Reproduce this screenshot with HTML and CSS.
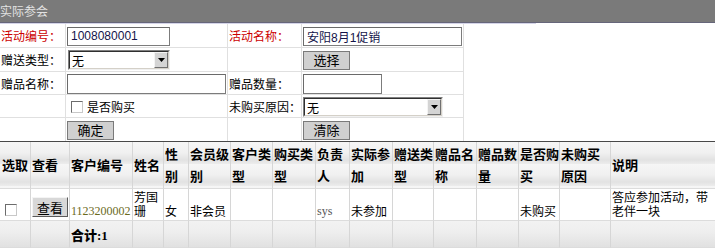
FILE: index.html
```html
<!DOCTYPE html>
<html lang="zh-CN">
<head>
<meta charset="utf-8">
<title>实际参会</title>
<link rel="stylesheet" href="styles.css">
</head>
<body>
<div class="titlebar">实际参会</div>
<div class="accent"></div>
<table class="form">
  <colgroup><col class="fc1"><col class="fc2"><col class="fc3"><col class="fc4"></colgroup>
  <tr class="fr1">
    <td class="lbl req">活动编号：</td>
    <td><input class="txt w-code" type="text" value="1008080001"></td>
    <td class="lbl req">活动名称：</td>
    <td><input class="txt w-name" type="text" value="安阳8月1促销"></td>
  </tr>
  <tr class="fr2">
    <td class="lbl">赠送类型：</td>
    <td>
      <div class="sel w-type">
        <select><option>无</option></select>
        <span class="sel-btn"><svg width="7" height="4" viewBox="0 0 7 4"><path d="M0 0h7L3.5 4z" fill="#000"/></svg></span>
      </div>
    </td>
    <td></td>
    <td><button class="btn" type="button">选择</button></td>
  </tr>
  <tr class="fr3">
    <td class="lbl">赠品名称：</td>
    <td><input class="txt w-gift" type="text"></td>
    <td class="lbl">赠品数量：</td>
    <td><input class="txt w-qty" type="text"></td>
  </tr>
  <tr class="fr4">
    <td></td>
    <td><label class="chk"><input class="box" type="checkbox"><span>是否购买</span></label></td>
    <td class="lbl">未购买原因：</td>
    <td>
      <div class="sel w-reason">
        <select><option>无</option></select>
        <span class="sel-btn"><svg width="7" height="4" viewBox="0 0 7 4"><path d="M0 0h7L3.5 4z" fill="#000"/></svg></span>
      </div>
    </td>
  </tr>
  <tr class="fr5">
    <td></td>
    <td><button class="btn" type="button">确定</button></td>
    <td></td>
    <td><button class="btn" type="button">清除</button></td>
  </tr>
</table>
<div class="divider"></div>
<table class="grid">
  <colgroup>
    <col class="g30"><col class="g39"><col class="g63"><col class="g31"><col class="g25"><col class="g42"><col class="g42"><col class="g43"><col class="g34"><col class="g43"><col class="g41"><col class="g43"><col class="g42"><col class="g41"><col class="g51"><col class="g105">
  </colgroup>
  <thead>
    <tr class="head">
      <th>选取</th><th>查看</th><th>客户编号</th><th>姓名</th><th>性别</th><th>会员级别</th><th>客户类型</th><th>购买类型</th><th>负责人</th><th>实际参加</th><th>赠送类型</th><th>赠品名称</th><th>赠品数量</th><th>是否购买</th><th>未购买原因</th><th>说明</th>
    </tr>
  </thead>
  <tbody>
    <tr class="data">
      <td><input class="box row-box" type="checkbox"></td>
      <td><button class="btn view" type="button">查看</button></td>
      <td class="serif code">1123200002</td>
      <td>芳国珊</td>
      <td>女</td>
      <td>非会员</td>
      <td></td>
      <td></td>
      <td class="serif sys">sys</td>
      <td>未参加</td>
      <td></td>
      <td></td>
      <td></td>
      <td>未购买</td>
      <td></td>
      <td>答应参加活动，带老伴一块</td>
    </tr>
    <tr class="foot">
      <td></td><td></td>
      <td class="total"><b>合计</b><span class="serif">:1</span></td>
      <td></td><td></td><td></td><td></td><td></td><td></td><td></td><td></td><td></td><td></td><td></td><td></td><td></td>
    </tr>
  </tbody>
</table>
</body>
</html>
```
FILE: styles.css
```css
html, body {
  margin: 0;
  padding: 0;
  background: #fff;
  font-family: "Noto Sans CJK SC", "Liberation Sans", sans-serif;
  font-size: 12px;
  color: #000;
}

.titlebar {
  height: 22px;
  line-height: 22px;
  background: #7a7a7a;
  color: #e2e2e2;
  font-size: 12px;
  border-bottom: 1px solid #66667a;
}

.accent {
  width: 536px;
  height: 1px;
  background: #d4d4e8;
}

/* ---------- search form ---------- */
.form {
  border-collapse: separate;
  border-spacing: 0;
  table-layout: fixed;
  width: 464px;
}
.fc1 { width: 66px; }
.fc2 { width: 162px; }
.fc3 { width: 74px; }
.fc4 { width: 162px; }

.form td {
  border-right: 1px solid #e0e0e0;
  border-bottom: 1px solid #e0e0e0;
  padding: 1px 1px 0;
  vertical-align: middle;
  white-space: nowrap;
  line-height: 14px;
  font-size: 12px;
}
.form tr:last-child td { border-bottom: none; }

.fr1, .fr2 { height: 24px; }
.fr3, .fr4 { height: 23px; }
.fr5 { height: 23px; }

.lbl { color: #000; }
.req { color: #cc0000; }

.txt {
  display: block;
  box-sizing: border-box;
  height: 19px;
  margin: 0;
  padding: 0 3px;
  border: 1px solid #7c7c7c;
  border-top-color: #6a6a6a;
  border-left-color: #6a6a6a;
  background: #fff;
  font-family: "Liberation Sans", "Noto Sans CJK SC", sans-serif;
  font-size: 12px;
  color: #14144a;
  outline: none;
}
.w-code { width: 103px; }
.w-name { width: 159px; }
.w-gift { width: 159px; height: 20px; }
.w-qty { width: 79px; height: 20px; }

.sel {
  position: relative;
  box-sizing: border-box;
  height: 20px;
  border: 1px solid;
  border-color: #808080 #f0f0f0 #f0f0f0 #808080;
}
.w-type { width: 102px; margin-left: 1px; }
.w-reason { width: 140px; }
.sel select {
  appearance: none;
  -webkit-appearance: none;
  display: block;
  box-sizing: border-box;
  width: 100%;
  height: 100%;
  margin: 0;
  padding: 0 0 0 2px;
  border: 1px solid;
  border-color: #303030 #d4d0c8 #d4d0c8 #303030;
  border-radius: 0;
  background: #fff;
  font-family: "Noto Sans CJK SC", sans-serif;
  font-size: 12px;
  color: #000;
  outline: none;
}
.sel-btn {
  position: absolute;
  top: 1px;
  right: 1px;
  box-sizing: border-box;
  width: 14px;
  height: 16px;
  display: flex;
  align-items: center;
  justify-content: center;
  background: #d4d4d4;
  border: 1px solid;
  border-color: #f4f4f4 #707070 #707070 #f4f4f4;
}

.btn {
  display: block;
  box-sizing: border-box;
  width: 47px;
  height: 19px;
  margin: 0;
  padding: 0;
  border: 1px solid #7a7a7a;
  background: #d0d0d0;
  font-family: "Noto Sans CJK SC", sans-serif;
  font-size: 13px;
  line-height: 16px;
  color: #000;
}

.chk {
  display: flex;
  align-items: center;
  gap: 4px;
}
.box {
  appearance: none;
  -webkit-appearance: none;
  box-sizing: border-box;
  width: 12px;
  height: 12px;
  margin: 0 0 0 4px;
  border: 1px solid;
  border-color: #6c6c6c #c8c8c8 #c8c8c8 #6c6c6c;
  background: #fff;
}

.divider {
  height: 1px;
  background: #484848;
}

/* ---------- result grid ---------- */
.grid {
  border-collapse: separate;
  border-spacing: 0;
  table-layout: fixed;
  width: 715px;
}
.g25 { width: 25px; }
.g30 { width: 30px; }
.g31 { width: 31px; }
.g34 { width: 34px; }
.g39 { width: 39px; }
.g41 { width: 41px; }
.g42 { width: 42px; }
.g43 { width: 43px; }
.g51 { width: 51px; }
.g63 { width: 63px; }
.g105 { width: 105px; }

.grid th, .grid td {
  border-left: 1px solid #d6d6d6;
  border-bottom: 1px solid #dcdcdc;
  padding: 0 0 0 1px;
  text-align: left;
}
.grid th:first-child, .grid td:first-child {
  border-left: none;
  padding-left: 2px;
}

.head { height: 47px; }
.head th {
  font-size: 13px;
  font-weight: bold;
  line-height: 22px;
  vertical-align: middle;
  background: repeating-linear-gradient(to bottom, #f6f6f6 0px, #f0f0f0 11px, #e2e2e2 18px, #ececec 22px);
}

.data { height: 32px; }
.data td {
  font-size: 12px;
  line-height: 14px;
  vertical-align: bottom;
  padding-bottom: 2px;
}
.data td:first-child { padding-bottom: 4px; }
.row-box { display: block; margin-left: 3px; }

.btn.view {
  width: 36px;
  height: 20px;
  margin-bottom: 1px;
  background: #d8d8d8;
  border: 1px solid;
  border-color: #f4f4f4 #5a5a5a #5a5a5a #f4f4f4;
  line-height: 17px;
}

.serif {
  font-family: "Liberation Serif", serif;
}
.code { color: #6a6a1c; font-size: 12px; }
.sys { color: #555; }

.foot { height: 27px; }
.foot td {
  vertical-align: middle;
  background: linear-gradient(to bottom, #f2f2f2 0px, #eeeeee 11px, #e0e0e0 27px);
}
.total {
  font-size: 13px;
  font-weight: bold;
}
.total .serif { font-weight: bold; }
```
